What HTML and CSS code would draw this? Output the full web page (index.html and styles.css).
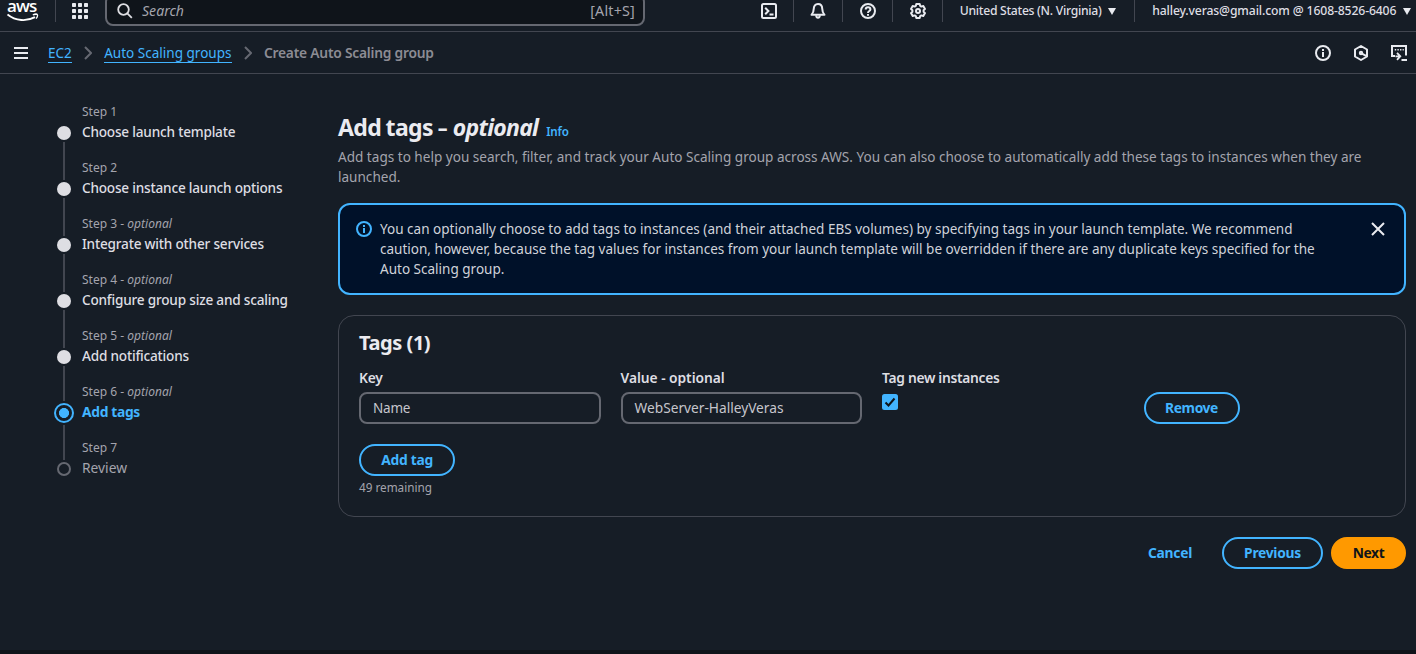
FILE: index.html
```
<!DOCTYPE html>
<html lang="en">
<head>
<meta charset="utf-8">
<title>Create Auto Scaling group</title>
<link rel="stylesheet" href="styles.css">
</head>
<body>
<header class="topbar">
  <a class="logo" aria-label="AWS">
    <span class="logo-word">aws</span>
    <svg class="logo-smile" width="32" height="9" viewBox="0 0 32 9" fill="none" stroke="#fff">
      <path d="M.5 1.500C8.500 8.200 20 8.600 28 4.200" stroke-width="1.900"/>
      <path d="M25.800 1.800c2-.8 4.300-.7 4.600-.1.300.8-.2 2.600-1.300 4" stroke-width="1.300"/>
    </svg>
  </a>
  <div class="apps">
    <svg width="16" height="16" viewBox="0 0 16 16" fill="#e9ebf0">
      <rect width="4" height="4" rx=".7"/><rect x="6" width="4" height="4" rx=".7"/><rect x="12" width="4" height="4" rx=".7"/>
      <rect y="6" width="4" height="4" rx=".7"/><rect x="6" y="6" width="4" height="4" rx=".7"/><rect x="12" y="6" width="4" height="4" rx=".7"/>
      <rect y="12" width="4" height="4" rx=".7"/><rect x="6" y="12" width="4" height="4" rx=".7"/><rect x="12" y="12" width="4" height="4" rx=".7"/>
    </svg>
  </div>
  <div class="search">
    <svg width="16" height="16" viewBox="0 0 16 16" fill="none" stroke="#dedee3" stroke-width="1.800"><circle cx="6.500" cy="6.500" r="5.300"/><path d="m10.300 10.300 4.500 4.500"/></svg>
    <span class="search-text">Search</span>
    <span class="search-key">[Alt+S]</span>
  </div>
  <nav class="tools">
    <span class="tool"><svg class="icon" viewBox="0 0 16 16"><rect x="1" y="1" width="14" height="14" rx="1.500"/><path d="m4.200 4.800 3.200 3.200-3.200 3.200M8.500 11.500h4"/></svg></span>
    <span class="tool tool-bell"><svg class="icon" viewBox="0 0 16 16"><path d="M8 1C5.200 1 3.800 3 3.800 5.600c0 3-.7 4.400-2.300 6.200h13c-1.600-1.800-2.300-3.200-2.300-6.200C12.200 3 10.800 1 8 1z" stroke-linejoin="round"/><path d="M6.200 12.200c0 3.300 3.600 3.300 3.600 0"/></svg></span>
    <span class="tool"><svg class="icon" viewBox="0 0 16 16"><circle cx="8" cy="8" r="7"/><path d="M5.700 6.500c0-3 4.700-3 4.700 0C10.400 8.100 8 8 8 10M8 11v1.800"/></svg></span>
    <span class="tool"><svg class="icon" viewBox="0 0 16 16" stroke-linejoin="round"><path d="M6.300 1h3.400l.5 1.900 1.100.7 2-.6 1.700 2.900L13.600 7.300v1.400l1.400 1.400-1.700 2.900-2-.6-1.100.7-.5 1.900H6.300l-.5-1.900-1.100-.7-2 .6L1 10.100l1.400-1.400V7.300L1 5.900 2.700 3l2 .6 1.100-.7z"/><circle cx="8" cy="8" r="2"/></svg></span>
  </nav>
  <div class="region"><span>United States (N. Virginia)</span><i class="caret"></i></div>
  <div class="account"><span>halley.veras@gmail.com @ 1608-8526-6406</span><i class="caret"></i></div>
</header>

<div class="crumbbar">
  <span class="menu"><i></i><i></i><i></i></span>
  <a class="crumb">EC2</a>
  <svg class="chevron" viewBox="0 0 8 14"><path d="m1 1 6 6-6 6"/></svg>
  <a class="crumb crumb-groups">Auto Scaling groups</a>
  <svg class="chevron" viewBox="0 0 8 14"><path d="m1 1 6 6-6 6"/></svg>
  <span class="crumb-current">Create Auto Scaling group</span>
  <div class="panel-icons">
    <svg class="icon" viewBox="0 0 16 16"><circle cx="8" cy="8" r="7"/><path d="M8 7v5M8 4v2"/></svg>
    <svg class="icon" viewBox="0 0 16 16"><path d="m8 1 6 3.500v7L8 15l-6-3.500v-7z" stroke-linejoin="round"/><circle cx="8" cy="8" r="1.200"/><path d="m8.500 8.300 5 2.800"/></svg>
    <svg class="icon panel-shell" viewBox="0 0 16 16"><path d="M4 11H1V1h14v9.500M10.500 15H16"/><path d="M4.500 11.300H9M6 7.800l3.300 3.500L6 14.800" stroke-width="1.800"/><path d="M3.800 4.700h9" stroke-width="1.500" stroke-dasharray="1.400 1.200"/></svg>
  </div>
</div>

<div class="page">
  <ol class="steps">
    <li class="step done"><span class="step-no">Step 1</span><span class="step-name">Choose launch template</span></li>
    <li class="step done"><span class="step-no">Step 2</span><span class="step-name">Choose instance launch options</span></li>
    <li class="step done"><span class="step-no">Step 3 - <em>optional</em></span><span class="step-name">Integrate with other services</span></li>
    <li class="step done"><span class="step-no">Step 4 - <em>optional</em></span><span class="step-name">Configure group size and scaling</span></li>
    <li class="step done before-active"><span class="step-no">Step 5 - <em>optional</em></span><span class="step-name">Add notifications</span></li>
    <li class="step active"><span class="step-no">Step 6 - <em>optional</em></span><span class="step-name">Add tags</span></li>
    <li class="step todo"><span class="step-no">Step 7</span><span class="step-name">Review</span></li>
  </ol>

  <main class="content">
    <div class="heading">
      <h1>Add tags <span class="dash">–</span> <em>optional</em></h1>
      <a class="info">Info</a>
    </div>
    <p class="description">Add tags to help you search, filter, and track your Auto Scaling group across AWS. You can also choose to automatically add these tags to instances when they are<br>launched.</p>

    <section class="alert">
      <svg class="icon alert-icon" viewBox="0 0 16 16"><circle cx="8" cy="8" r="7"/><path d="M8 7v5M8 4v2"/></svg>
      <p>You can optionally choose to add tags to instances (and their attached EBS volumes) by specifying tags in your launch template. We recommend<br>caution, however, because the tag values for instances from your launch template will be overridden if there are any duplicate keys specified for the<br>Auto Scaling group.</p>
      <svg class="close" viewBox="0 0 14 14"><path d="m1 1 12 12M13 1 1 13"/></svg>
    </section>

    <section class="card">
      <h2>Tags (1)</h2>
      <div class="tag-row">
        <div class="field"><label class="label">Key</label><div class="input input-key">Name</div></div>
        <div class="field"><label class="label label-value">Value - optional</label><div class="input">WebServer-HalleyVeras</div></div>
        <div class="field"><label class="label label-new">Tag new instances</label>
          <svg class="checkbox" viewBox="0 0 16 16"><rect width="16" height="16" rx="2.500" fill="#42b4ff"/><path d="m3.500 8.500 3 3 6-7" fill="none" stroke="#0f141a" stroke-width="2"/></svg>
        </div>
        <div class="field field-action"><button class="btn btn-remove">Remove</button></div>
      </div>
      <button class="btn btn-add">Add tag</button>
      <p class="remaining">49 remaining</p>
    </section>

    <div class="actions">
      <button class="btn btn-cancel">Cancel</button>
      <button class="btn btn-previous">Previous</button>
      <button class="btn btn-next">Next</button>
    </div>
  </main>
</div>
<footer class="footer"></footer>
</body>
</html>
```
FILE: styles.css
```
*, *::before, *::after { box-sizing: border-box; }

body {
  margin: 0;
  height: 654px;
  overflow: hidden;
  display: flex;
  flex-direction: column;
  background: #161d26;
  color: #dedee3;
  font: 13.54px/20px "Noto Sans", "Open Sans", sans-serif;
}

h1, h2, p, ol { margin: 0; padding: 0; }
svg { display: block; flex: none; }

.icon { width: 16px; height: 16px; fill: none; stroke: #e9ebf0; stroke-width: 2; }

/* Top bar */
.topbar {
  height: 32px;
  flex: none;
  display: flex;
  align-items: flex-start;
  border-bottom: 1px solid #424650;
  white-space: nowrap;
}
.logo {
  width: 56px;
  height: 22px;
  padding-left: 7px;
  border-right: 1px solid #424650;
}
.logo-word {
  display: block;
  height: 13px;
  font: 600 17px/12px "Open Sans", sans-serif;
  letter-spacing: -.9px;
  color: #fff;
}
.apps { width: 49px; height: 22px; display: flex; align-items: center; padding-left: 16px; }
.search {
  width: 540px;
  height: 32px;
  margin-top: -6px;
  padding: 2px 8px 0 10px;
  display: flex;
  align-items: center;
  border: 2px solid #656871;
  border-radius: 8px;
  background: #0f141a;
  color: #a4a4ad;
}
.search-text { margin-left: 9px; font-size: 14.08px; font-style: italic; }
.search-key { margin-left: auto; font-size: 14.3px; letter-spacing: .2px; }
.tools { display: flex; margin-left: 99px; }
.tool {
  width: 49.700px;
  height: 22px;
  padding-left: 1.500px;
  display: flex;
  align-items: center;
  justify-content: center;
  border-right: 1px solid #424650;
}
.tool-bell { padding-left: 0; }
.region, .account {
  height: 22px;
  display: flex;
  align-items: center;
  font-weight: 500;
}
.region { width: 192px; padding-left: 17px; border-right: 1px solid #424650; font-size: 12.2px; letter-spacing: -.29px; }
.account { padding-left: 17.500px; font-size: 12.2px; letter-spacing: -.13px; }
.caret {
  margin-left: 6.500px;
  border: 4.500px solid transparent;
  border-top: 7px solid #e9ebf0;
  border-bottom: 0;
}

/* Breadcrumb bar */
.crumbbar {
  height: 42px;
  flex: none;
  display: flex;
  align-items: center;
  padding: 0 9px 0 14px;
  border-bottom: 1px solid #424650;
  white-space: nowrap;
}
.menu { width: 34px; display: grid; gap: 3px; }
.menu i { width: 14px; height: 2px; background: #e9ebf0; }
.crumb { margin-top: 1px; color: #42b4ff; border-bottom: 1px solid #42b4ff; line-height: 18px; }
.chevron { width: 8px; height: 14px; margin: 0 12.200px; fill: none; stroke: #656871; stroke-width: 2; }
.crumb-current { font-weight: 650; font-size: 13.8px; letter-spacing: -.22px; color: #8c8c94; }
.panel-icons { display: flex; gap: 22px; margin-left: auto; }

/* Page body */
.page { flex: 1; display: flex; align-items: flex-start; }

.steps { width: 338px; padding: 28px 0 0 57px; list-style: none; }
.step {
  height: 56px;
  display: grid;
  grid-template-columns: 14px 1fr;
  grid-template-rows: 20px 22px 14px;
  column-gap: 11px;
  white-space: nowrap;
}
.step::before {
  content: "";
  grid-area: 2 / 1;
  align-self: center;
  justify-self: center;
  width: 14px;
  height: 14px;
  border-radius: 50%;
  background: #dedee3;
}
.step::after {
  content: "";
  grid-area: 2 / 1 / 4;
  justify-self: center;
  width: 2px;
  height: 38px;
  margin-top: 20px;
  background: #424650;
}
.step-no { grid-area: 1 / 2; font-size: 12px; color: #a4a4ad; }
.step-no em { line-height: 1; letter-spacing: .05px; }
.step-name { grid-area: 2 / 2; font-size: 13.6px; font-weight: 500; letter-spacing: -.2px; }
.before-active::after { height: 35px; }
.active::before {
  width: 20px;
  height: 20px;
  margin: 0 -3px;
  border: 2px solid #42b4ff;
  background: radial-gradient(circle, #42b4ff 4.700px, transparent 5.300px);
}
.active::after { height: 35px; margin-top: 23px; }
.active .step-name { font-weight: 700; font-size: 13.8px; letter-spacing: -.32px; color: #42b4ff; }
.todo::before { border: 2px solid #656871; background: none; }
.todo::after { display: none; }
.todo .step-name { font-size: 13.8px; font-weight: 400; letter-spacing: 0; color: #a4a4ad; }

.content { flex: 1; padding: 42px 10px 0 0; }
.heading { height: 31px; display: flex; align-items: baseline; white-space: nowrap; line-height: 24px; margin-top: -1px; margin-bottom: 1px; }
h1 { font-size: 23px; line-height: 24px; letter-spacing: -.64px; color: #ebebf0; word-spacing: -.8px; }
h1 .dash { display: inline-block; transform: scaleX(.85); }
h1 em { font-size: 23px; letter-spacing: -.75px; }
.info { margin-left: 8px; font-size: 11.6px; font-weight: 650; letter-spacing: -.15px; color: #42b4ff; }
.description { font-size: 13.57px; color: #a4a4ad; white-space: nowrap; }

.alert {
  height: 92px;
  margin-top: 16px;
  padding: 14px 20px 14px 16px;
  display: flex;
  align-items: flex-start;
  border: 2px solid #42b4ff;
  border-radius: 12px;
  background: #001129;
  color: #d0d3da;
  font-size: 13.54px;
  white-space: nowrap;
}
.alert-icon { margin: 2px 8px 0 0; stroke: #42b4ff; }
.close { width: 14px; height: 14px; margin: 3px -1px 0 auto; fill: none; stroke: #e9ebf0; stroke-width: 2; }

.card {
  height: 202px;
  margin-top: 20px;
  padding: 16px 20px;
  border: 1px solid #424650;
  border-radius: 16px;
}
h2 { font-size: 20px; line-height: 22px; letter-spacing: -.45px; color: #ebebf0; }
.tag-row { display: grid; grid-template-columns: repeat(4, 1fr); gap: 20px; margin-top: 14px; }
.label { display: block; margin-bottom: 4px; font-size: 13.8px; font-weight: 650; letter-spacing: -.22px; }
.label-value { letter-spacing: -.04px; }
.label-new { margin-bottom: 6px; letter-spacing: -.29px; }
.input {
  height: 32px;
  padding: 4px 12px;
  border: 2px solid #656871;
  border-radius: 8px;
  font-size: 13.71px;
  color: #c6c6cd;
}
.input-key { font-size: 13.5px; letter-spacing: -.2px; }
.checkbox { width: 16px; height: 16px; }
.field-action { padding-top: 24px; }

.btn {
  display: block;
  height: 32px;
  padding: 0;
  border: 2px solid #42b4ff;
  border-radius: 16px;
  background: none;
  color: #42b4ff;
  font: 700 13.8px/20px "Noto Sans", "Open Sans", sans-serif;
  letter-spacing: -.27px;
}
.btn-remove { width: 96px; letter-spacing: -.4px; }
.btn-add { width: 96px; margin-top: 20px; }
.remaining { margin-top: 1px; font-size: 11.73px; color: #a4a4ad; }

.actions { display: flex; justify-content: flex-end; margin-top: 20px; }
.btn-cancel { width: 88px; border: 0; }
.btn-previous { width: 101px; margin: 0 8px; }
.btn-next { width: 75px; border-color: #ff9900; background: #ff9900; color: #0f141a; letter-spacing: -.45px; }

.footer { height: 4px; flex: none; background: #0f141a; }
```
